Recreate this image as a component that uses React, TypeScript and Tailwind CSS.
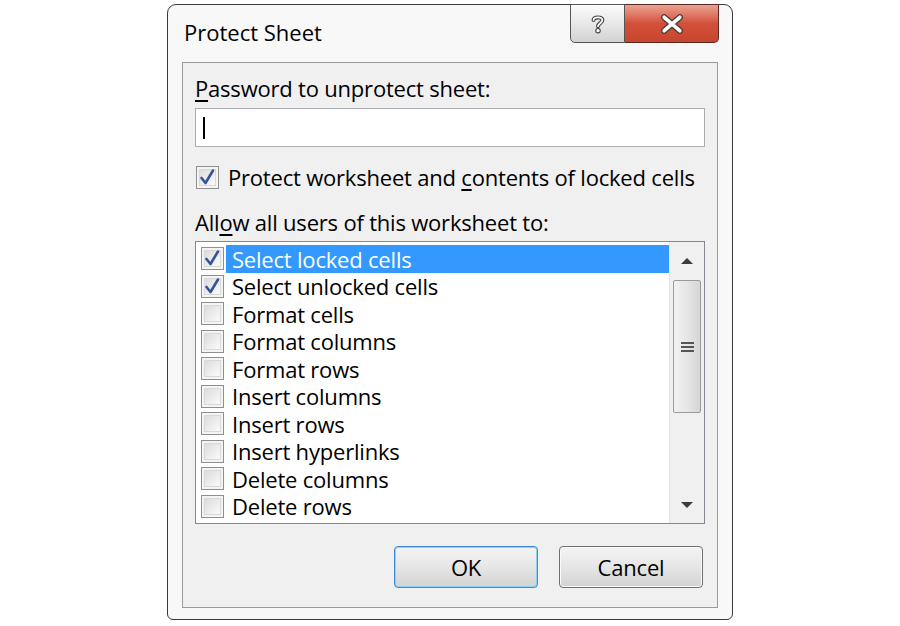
import React from "react";

const items: { label: string; checked: boolean; selected?: boolean }[] = [
  { label: "Select locked cells", checked: true, selected: true },
  { label: "Select unlocked cells", checked: true },
  { label: "Format cells", checked: false },
  { label: "Format columns", checked: false },
  { label: "Format rows", checked: false },
  { label: "Insert columns", checked: false },
  { label: "Insert rows", checked: false },
  { label: "Insert hyperlinks", checked: false },
  { label: "Delete columns", checked: false },
  { label: "Delete rows", checked: false },
];

function CheckBox({ checked }: { checked: boolean }) {
  return (
    <div className="w-[23px] h-[23px] border border-[#8f8f8f] bg-[#f4f4f4] p-[2px] shrink-0 relative">
      <div className="w-full h-full border border-[#d8d8d8] bg-gradient-to-br from-[#dcdcdc] to-[#fbfbfb]" />
      {checked && (
        <svg viewBox="0 0 21 21" className="absolute inset-0 w-full h-full">
          <path d="M4.5 11 L8.5 16 L16 3.5" fill="none" stroke="#33549a" strokeWidth="2.6" strokeLinejoin="round" strokeLinecap="round" />
        </svg>
      )}
    </div>
  );
}

export default function App() {
  const font = { fontFamily: '"Open Sans", "Noto Sans", sans-serif', fontWeight: 500 };
  return (
    <div className="w-[900px] h-[626px] bg-white overflow-hidden text-black" style={font}>
      <div className="ml-[167px] mt-[4px] w-[566px] h-[616px] border border-[#3a3a3a] rounded-t-[9px] rounded-b-[6px] bg-[#f8f8f8] flex flex-col relative">
        {/* title bar */}
        <div className="h-[57px] flex items-start shrink-0">
          <div className="ml-[16px] mt-[13px] text-[22px] leading-[28px]">Protect Sheet</div>
          <div className="ml-auto mr-[13px] -mt-[1px] flex">
            <div className="w-[55px] h-[39px] border border-[#555] rounded-bl-[5px] bg-gradient-to-b from-[#fbfbfb] via-[#e8e8e8] to-[#d2d2d2] flex items-center justify-center">
              <svg viewBox="0 0 14 18" className="w-[16px] h-[20px]">
                <path d="M3 5.5 C3 2.5 11 2 11 5.5 C11 8 7 8.5 7 11" fill="none" stroke="#444" strokeWidth="3.6" strokeLinecap="round" />
                <path d="M3 5.5 C3 2.5 11 2 11 5.5 C11 8 7 8.5 7 11" fill="none" stroke="#fff" strokeWidth="1.6" strokeLinecap="round" />
                <circle cx="7" cy="15" r="2" fill="#fff" stroke="#444" strokeWidth="1" />
              </svg>
            </div>
            <div className="w-[94px] h-[39px] border border-l-0 border-[#5a2a20] rounded-br-[5px] bg-gradient-to-b from-[#eaa193] via-[#d2503a] to-[#c8462e] flex items-center justify-center">
              <svg viewBox="0 0 24 18" className="w-[28px] h-[20px]">
                <path d="M5 3 L19 15 M19 3 L5 15" fill="none" stroke="#4a3a36" strokeWidth="5.6" strokeLinecap="round" />
                <path d="M5 3 L19 15 M19 3 L5 15" fill="none" stroke="#fff" strokeWidth="3.4" strokeLinecap="round" />
              </svg>
            </div>
          </div>
        </div>
        {/* client area */}
        <div className="mx-[14px] h-[546px] border border-[#9a9a9a] bg-[#f0f0f0] flex flex-col px-[12px]">
          <div className="mt-[13px] text-[22px] leading-[24px] tracking-[-0.2px]">
            <span className="underline underline-offset-[3px]">P</span>assword to unprotect sheet:
          </div>
          <div className="mt-[8px] h-[39px] border border-[#abadb3] bg-white flex items-center pl-[7px]">
            <div className="w-[2px] h-[22px] bg-black" />
          </div>
          <div className="mt-[18px] h-[24px] flex items-center ml-[1px]">
            <CheckBox checked={true} />
            <div className="ml-[9px] text-[22px] leading-[24px] tracking-[-0.2px] -mt-[1px]">
              Protect worksheet and <span className="underline underline-offset-[3px]">c</span>ontents of locked cells
            </div>
          </div>
          <div className="mt-[21px] text-[22px] leading-[24px] tracking-[-0.2px]">
            All<span className="underline underline-offset-[3px]">o</span>w all users of this worksheet to:
          </div>
          <div className="mt-[7px] h-[283px] border border-[#828790] bg-white flex">
            <div className="flex-1 pt-[3px] pl-[5px] overflow-hidden">
              {items.map((it) => (
                <div key={it.label} className="h-[27.5px] flex items-center">
                  <CheckBox checked={it.checked} />
                  <div
                    className={
                      "ml-[2px] flex-1 h-full flex items-center pl-[6px] text-[22px] leading-[24px] tracking-[-0.2px] " +
                      (it.selected ? "bg-[#3399ff] text-white" : "")
                    }
                  >
                    {it.label}
                  </div>
                </div>
              ))}
            </div>
            <div className="w-[35px] bg-[#f0f0f0] border-l border-[#e6e6e6] flex flex-col items-center">
              <div className="h-[38px] w-full flex items-center justify-center">
                <svg viewBox="0 0 12 6" className="w-[12px] h-[6px]">
                  <path d="M0 6 L6 0 L12 6 Z" fill="#3c3c3c" />
                </svg>
              </div>
              <div className="w-[28px] h-[133px] border border-[#9a9a9a] rounded-[2px] bg-gradient-to-r from-[#f2f2f2] via-[#e6e6e6] to-[#d6d6d6] flex flex-col items-center justify-center gap-[2px]">
                <div className="w-[13px] h-[2px] bg-[#555]" />
                <div className="w-[13px] h-[2px] bg-[#555]" />
                <div className="w-[13px] h-[2px] bg-[#555]" />
              </div>
              <div className="flex-1" />
              <div className="h-[36px] w-full flex items-center justify-center">
                <svg viewBox="0 0 12 6" className="w-[12px] h-[6px]">
                  <path d="M0 0 L6 6 L12 0 Z" fill="#3c3c3c" />
                </svg>
              </div>
            </div>
          </div>
          <div className="mt-[22px] flex justify-end gap-[21px] pr-[2px]">
            <div className="w-[144px] h-[42px] rounded-[4px] border border-[#3c8ad6] shadow-[inset_0_0_0_1px_#8fd0f5] bg-gradient-to-b from-[#f4f4f4] via-[#e6e6e6] to-[#d2d2d2] flex items-center justify-center text-[22px] tracking-[-0.2px]">
              OK
            </div>
            <div className="w-[144px] h-[42px] rounded-[4px] border border-[#707070] shadow-[inset_0_0_0_1px_#fafafa] bg-gradient-to-b from-[#f4f4f4] via-[#e6e6e6] to-[#d2d2d2] flex items-center justify-center text-[22px] tracking-[-0.2px]">
              Cancel
            </div>
          </div>
        </div>
      </div>
    </div>
  );
}
